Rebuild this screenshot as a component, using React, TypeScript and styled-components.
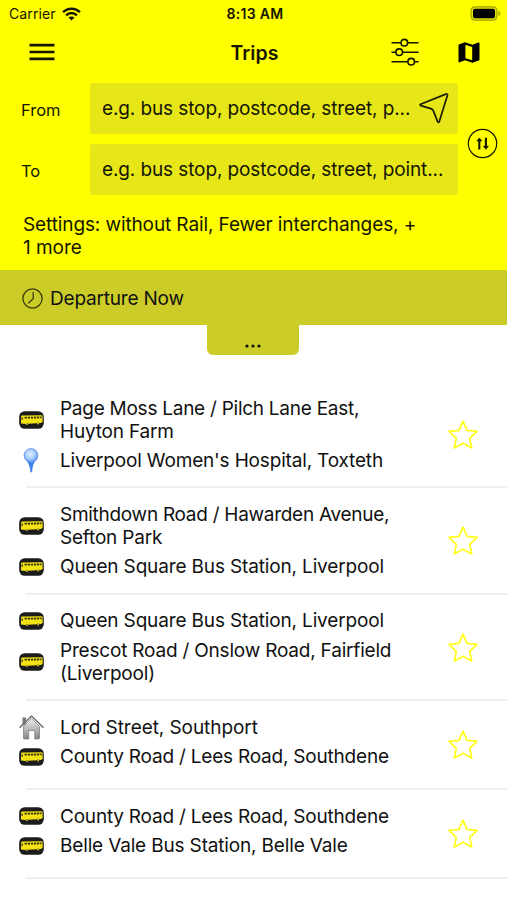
import React from 'react';
import styled, { createGlobalStyle } from 'styled-components';

const GlobalStyle = createGlobalStyle`
  * { box-sizing: border-box; }
  body {
    margin: 0;
    background: #fff;
    color: #111;
    font-family: Inter, 'Liberation Sans', sans-serif;
  }
  svg { display: block; flex: none; }
`;

const Screen = styled.div`
  width: 507px;
  height: 900px;
  overflow: hidden;
  background: #fff;
`;

const Header = styled.header`
  height: 270px;
  background: #ffff00;
  color: #151500;
`;

const StatusBar = styled.div`
  display: grid;
  grid-template-columns: 1fr auto 1fr;
  align-items: center;
  height: 27px;
  padding: 0 6px 0 9px;
`;

const Carrier = styled.div`
  display: flex;
  align-items: center;
  gap: 6px;
  font-size: 14px;
  letter-spacing: 0.1px;
`;

const Clock = styled.div`
  font-size: 14px;
  font-weight: 600;
  letter-spacing: 0.3px;
`;

const Battery = styled.div`
  justify-self: end;
`;

const NavBar = styled.div`
  display: grid;
  grid-template-columns: 1fr auto 1fr;
  align-items: center;
  height: 50px;
  padding: 0 27px 0 29px;
`;

const Title = styled.h1`
  margin: 0;
  padding-top: 1px;
  font-size: 19.5px;
  font-weight: 600;
  letter-spacing: 0.1px;
`;

const NavActions = styled.div`
  display: flex;
  justify-content: flex-end;
  align-items: center;
  gap: 39px;
`;

const SearchForm = styled.div`
  display: grid;
  grid-template-columns: 437px 1fr;
  align-items: center;
  margin-top: 6px;
  padding-left: 21px;
`;

const Fields = styled.div`
  display: flex;
  flex-direction: column;
  gap: 10px;
`;

const FieldRow = styled.label`
  display: grid;
  grid-template-columns: 69px 368px;
  align-items: center;
`;

const FieldName = styled.span`
  padding-top: 2px;
  font-size: 16.5px;
`;

const Field = styled.span`
  display: flex;
  align-items: center;
  justify-content: space-between;
  height: 51px;
  padding: 0 9px 0 12px;
  border-radius: 3px;
  background: #e6e619;
`;

const Line = styled.span<{ $spacing?: number }>`
  display: block;
  white-space: nowrap;
  font-size: 19px;
  line-height: 23.3px;
  letter-spacing: ${({ $spacing = -0.2 }) => $spacing}px;
`;

const SwapButton = styled.button`
  display: flex;
  justify-self: start;
  margin: 9px 0 0 9px;
  padding: 0;
  border: 0;
  background: none;
  color: inherit;
`;

const Settings = styled.div`
  margin: 18px 0 0 23px;
`;

const DepartureBar = styled.div`
  display: flex;
  align-items: center;
  gap: 7px;
  height: 55px;
  padding: 2px 0 0 22px;
  background: #cccc29;
`;

const Handle = styled.div`
  display: flex;
  justify-content: center;
  align-items: center;
  width: 92px;
  height: 30px;
  margin: 0 0 0 207px;
  padding-top: 11px;
  border-radius: 0 0 6px 6px;
  background: #cccc29;
`;

const TripList = styled.div`
  padding-top: 27px;
`;

const TripRow = styled.div`
  display: grid;
  grid-template-columns: 1fr 30px;
  min-height: 89px;
  margin-left: 26px;
  padding: 14.5px 29px 14px 0;
  border-bottom: 2px solid #efefef;
`;

const Stops = styled.div`
  display: flex;
  flex-direction: column;
  gap: 6px;
  margin-left: -7px;
`;

const Stop = styled.div`
  display: grid;
  grid-template-columns: 41px 1fr;
  align-items: center;
`;

const IconSlot = styled.div`
  display: flex;
  width: 25px;
  height: 23px;
  align-items: center;
  justify-content: center;
`;

const StarSlot = styled.div`
  align-self: center;
`;

const WifiIcon = () => (
  <svg width="19" height="14" viewBox="0 0 19 14" fill="none" stroke="#151500" strokeWidth="2.5">
    <path d="M1.1 5.2C5.8.5 13.2.5 17.9 5.2" />
    <path d="M4.1 8.3c3-3 7.8-3 10.8 0" />
    <path d="M9.5 13.6 6.5 10.5c1.8-1.5 4.2-1.5 6 0Z" fill="#151500" stroke="none" />
  </svg>
);

const BatteryIcon = () => (
  <svg width="31" height="15" viewBox="0 0 31 15">
    <rect x="1" y=".8" width="26" height="13.4" rx="4" fill="#e5e500" stroke="#a0a000" strokeWidth="1.2" />
    <rect x="3" y="2.8" width="22" height="9.4" rx="2" fill="#000" />
    <path d="M28.5 5c2.4 1 2.4 4 0 5Z" fill="#a0a000" />
  </svg>
);

const MenuIcon = () => (
  <svg width="26" height="18" viewBox="0 0 26 18" stroke="#151500" strokeWidth="2.7">
    <path d="M.5 2.2h25M.5 9h25M.5 15.9h25" />
  </svg>
);

const SlidersIcon = () => (
  <svg width="28" height="28" viewBox="0 0 28 28" fill="#ffff00" stroke="#151500" strokeWidth="1.6">
    <path d="M.5 4.7h27M.5 14.2h27M.5 23.7h27" />
    <circle cx="13.3" cy="4.7" r="3.3" />
    <circle cx="8.2" cy="14.2" r="3.3" />
    <circle cx="20.2" cy="23.7" r="3.3" />
  </svg>
);

const MapIcon = () => (
  <svg width="22" height="21" viewBox="0 0 22 21">
    <path
      fill="#000"
      fillRule="evenodd"
      d="M.5 3.5Q.5 2.5 1.4 2.2L7 .3l7.5 2.4L20.3.5q1.2-.3 1.2.8v16.2q0 .8-.8 1.1l-6.2 2.1L7 18.2l-5.4 2.1q-1.1.4-1.1-.8ZM7.4 2.8v13.4l6.8 2.1V5Z"
    />
  </svg>
);

const LocateIcon = () => (
  <svg width="31" height="31" viewBox="0 0 31 31" fill="none" stroke="#1c1c00" strokeWidth="1.7" strokeLinejoin="round">
    <path d="M2.6 11.2 27.8 1.1q2-.5 1.6 1.3L21.3 28.6q-.8 1.7-1.7 0l-4.2-10.7q-.8-1.8-2.5-2.3L2.8 12.6q-1.3-.7-.2-1.4Z" />
  </svg>
);

const SwapIcon = () => (
  <svg width="31" height="31" viewBox="0 0 31 31" fill="none" stroke="#151500">
    <circle cx="15.5" cy="15.5" r="14.2" strokeWidth="1.2" />
    <path strokeWidth="2.1" d="M12.3 21.5v-9M18.9 9.8v9" />
    <path fill="#151500" strokeWidth=".8" strokeLinejoin="round" d="m9.9 13 2.4-3 2.4 3ZM16.5 18.2l2.4 3.1 2.4-3.1Z" />
  </svg>
);

const ClockIcon = () => (
  <svg width="21" height="21" viewBox="0 0 21 21" fill="none" stroke="#3c3c08" strokeWidth="1.3">
    <circle cx="10.5" cy="10.5" r="9.6" />
    <path d="M11.2 4.5v6.2l-4.6 4.2" strokeLinecap="round" />
  </svg>
);

const DotsIcon = () => (
  <svg width="16" height="4" viewBox="0 0 16 4" fill="#111100">
    <circle cx="2" cy="2" r="1.6" />
    <circle cx="8" cy="2" r="1.6" />
    <circle cx="14" cy="2" r="1.6" />
  </svg>
);

const BusIcon = () => (
  <svg width="25" height="18" viewBox="0 0 25 18">
    <rect x=".2" y=".2" width="24.6" height="17.6" rx="5.5" fill="#1d1c1c" />
    <path d="M2 5.6q0-1.1 1.2-1.1L22.6 4.3q1 0 1 1v5.8l-1.7.8-1.4.1q-1.300-1.300-2.600.2L9.200 12.800q-1.300-1.500-2.800.2L2 12.600Z" fill="#f3e214" />
    <path d="M5.600 6.700 22.600 6.400" stroke="#3a360f" strokeWidth="1.800" strokeDasharray="2.300 .8" />
    <path d="M2.500 6.200h1.300v2.800H2.500Z" fill="#4a4510" />
    <circle cx="7.800" cy="13" r="1" fill="#d8c914" />
    <circle cx="19.200" cy="12.500" r="1" fill="#d8c914" />
  </svg>
);

const PinIcon = () => (
  <svg width="17" height="25" viewBox="0 0 17 25">
    <defs>
      <radialGradient id="pin-shine" cx=".45" cy=".4" r=".6">
        <stop offset="0" stopColor="#e0efff" />
        <stop offset=".55" stopColor="#a9ceff" />
        <stop offset="1" stopColor="#5b93ee" />
      </radialGradient>
    </defs>
    <path d="M3 12h10q-3.3 3.5-4 12.3H7.6Q6.5 15.5 3 12Z" fill="#4381ed" />
    <circle cx="8" cy="7.5" r="6.9" fill="url(#pin-shine)" stroke="#5e91e4" strokeWidth=".8" />
  </svg>
);

const HouseIcon = () => (
  <svg width="25" height="26" viewBox="0.5 0 25 26">
    <defs>
      <linearGradient id="house-wall" x1="0" y1="0" x2="0" y2="1">
        <stop offset="0" stopColor="#eeeeee" />
        <stop offset="1" stopColor="#858585" />
      </linearGradient>
    </defs>
    <path d="M4 3.5h3.6v6L4 12Z" fill="#777" />
    <path d="M5 12.5 13 4.5l8 8V24q0 1-1 1h-3.7v-8.500H10.200V25H6q-1 0-1-1Z" fill="url(#house-wall)" stroke="#777" strokeWidth=".7" />
    <path d="M1.500 13.300 13 2l11.500 11.300" fill="none" stroke="#707070" strokeWidth="1.600" strokeLinejoin="round" strokeLinecap="round" />
  </svg>
);

const StarIcon = () => (
  <svg width="30" height="29" viewBox="0 0 30 29" fill="none" stroke="#ffff19" strokeWidth="1.7" strokeLinejoin="round">
    <path d="M15 1.2 19 10.3 29 11.4 21.7 18.3 23.7 28 15 23.3 6.3 28 8.3 18.3 1 11.4 11 10.3Z" />
  </svg>
);

type StopKind = 'bus' | 'pin' | 'house';
type TextLine = { text: string; spacing?: number };
type StopData = { kind: StopKind; lines: TextLine[] };

const icons: Record<StopKind, React.FC> = { bus: BusIcon, pin: PinIcon, house: HouseIcon };

const trips: StopData[][] = [
  [
    { kind: 'bus', lines: [{ text: 'Page Moss Lane / Pilch Lane East,', spacing: -0.26 }, { text: 'Huyton Farm' }] },
    { kind: 'pin', lines: [{ text: "Liverpool Women's Hospital, Toxteth", spacing: -0.17 }] },
  ],
  [
    { kind: 'bus', lines: [{ text: 'Smithdown Road / Hawarden Avenue,', spacing: -0.28 }, { text: 'Sefton Park' }] },
    { kind: 'bus', lines: [{ text: 'Queen Square Bus Station, Liverpool', spacing: -0.15 }] },
  ],
  [
    { kind: 'bus', lines: [{ text: 'Queen Square Bus Station, Liverpool', spacing: -0.15 }] },
    { kind: 'bus', lines: [{ text: 'Prescot Road / Onslow Road, Fairfield' }, { text: '(Liverpool)' }] },
  ],
  [
    { kind: 'house', lines: [{ text: 'Lord Street, Southport', spacing: -0.07 }] },
    { kind: 'bus', lines: [{ text: 'County Road / Lees Road, Southdene', spacing: -0.21 }] },
  ],
  [
    { kind: 'bus', lines: [{ text: 'County Road / Lees Road, Southdene', spacing: -0.21 }] },
    { kind: 'bus', lines: [{ text: 'Belle Vale Bus Station, Belle Vale', spacing: -0.16 }] },
  ],
];

export default function App() {
  return (
    <>
      <GlobalStyle />
      <Screen>
        <Header>
          <StatusBar>
            <Carrier>Carrier <WifiIcon /></Carrier>
            <Clock>8:13 AM</Clock>
            <Battery><BatteryIcon /></Battery>
          </StatusBar>
          <NavBar>
            <MenuIcon />
            <Title>Trips</Title>
            <NavActions><SlidersIcon /><MapIcon /></NavActions>
          </NavBar>
          <SearchForm>
            <Fields>
              <FieldRow>
                <FieldName>From</FieldName>
                <Field>
                  <Line $spacing={-0.11}>e.g. bus stop, postcode, street, p...</Line>
                  <LocateIcon />
                </Field>
              </FieldRow>
              <FieldRow>
                <FieldName>To</FieldName>
                <Field><Line $spacing={-0.11}>e.g. bus stop, postcode, street, point...</Line></Field>
              </FieldRow>
            </Fields>
            <SwapButton aria-label="Swap"><SwapIcon /></SwapButton>
          </SearchForm>
          <Settings>
            <Line $spacing={-0.11}>Settings: without Rail, Fewer interchanges, +</Line>
            <Line $spacing={-0.05}>1 more</Line>
          </Settings>
        </Header>
        <DepartureBar>
          <ClockIcon />
          <Line>Departure Now</Line>
        </DepartureBar>
        <Handle><DotsIcon /></Handle>
        <TripList>
          {trips.map((stops, i) => (
            <TripRow key={i}>
              <Stops>
                {stops.map((stop, j) => {
                  const Icon = icons[stop.kind];
                  return (
                    <Stop key={j}>
                      <IconSlot><Icon /></IconSlot>
                      <div>
                        {stop.lines.map((line) => (
                          <Line key={line.text} $spacing={line.spacing}>{line.text}</Line>
                        ))}
                      </div>
                    </Stop>
                  );
                })}
              </Stops>
              <StarSlot><StarIcon /></StarSlot>
            </TripRow>
          ))}
        </TripList>
      </Screen>
    </>
  );
}
